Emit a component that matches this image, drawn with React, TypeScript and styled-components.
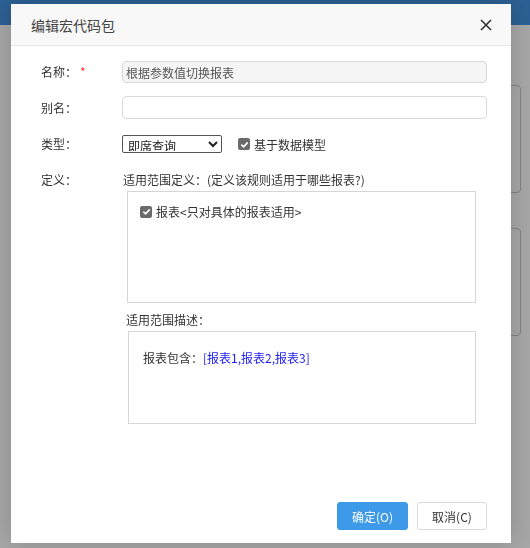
import React from "react";
import styled, { createGlobalStyle } from "styled-components";

const GlobalStyle = createGlobalStyle`
  html, body {
    margin: 0;
    padding: 0;
    width: 530px;
    height: 548px;
    overflow: hidden;
    background: #fff;
    font-family: "Noto Sans CJK SC", "Noto Sans", sans-serif;
    font-size: 12px;
    color: #333;
  }
  * { box-sizing: border-box; }
`;

const Page = styled.div`
  height: 548px;
  display: flex;
  flex-direction: column;
`;

const TopBar = styled.div`
  height: 25px;
  background: #4493e2;
`;

const PageContent = styled.div`
  display: flex;
  flex-direction: column;
  gap: 35px;
  padding: 60px 9px 0 300px;
`;

const BgCard = styled.div`
  height: 108px;
  border: 1px solid #c8c8c8;
  border-radius: 4px;
  background: #fff;
`;

const Mask = styled.div`
  position: fixed;
  inset: 0;
  background: rgba(0, 0, 0, 0.35);
`;

const Dialog = styled.div`
  position: fixed;
  left: 11px;
  top: 4px;
  width: 500px;
  height: 539px;
  background: #fff;
  display: flex;
  flex-direction: column;
  box-shadow: 0 0 24px rgba(0, 0, 0, 0.18);
`;

const Header = styled.div`
  height: 42px;
  flex: none;
  display: flex;
  align-items: center;
  justify-content: space-between;
  padding: 0 18px 0 20px;
  background: #f8f8f8;
  border-bottom: 1px solid #e6e6e6;
`;

const Title = styled.h2`
  margin: 0;
  font-size: 14px;
  font-weight: normal;
  color: #444;
`;

const CloseButton = styled.button`
  border: none;
  background: none;
  padding: 0;
  width: 14px;
  height: 14px;
  display: flex;
  align-items: center;
  justify-content: center;
  cursor: pointer;
`;

const Body = styled.div`
  flex: 1;
  padding: 15px 24px 0 30px;
  display: flex;
  flex-direction: column;
`;

const Row = styled.div<{ $top: number }>`
  display: flex;
  align-items: flex-start;
  margin-top: ${({ $top }) => $top}px;
`;

const Label = styled.label<{ $height: number }>`
  width: 81px;
  flex: none;
  height: ${({ $height }) => $height}px;
  line-height: ${({ $height }) => $height}px;
  color: #333;
  white-space: nowrap;
`;

const Required = styled.span`
  color: #f33;
  margin-left: 3px;
`;

const Field = styled.div`
  flex: 1;
  display: flex;
  flex-direction: column;
  min-width: 0;
`;

const TextInput = styled.input<{ $height: number }>`
  width: 100%;
  height: ${({ $height }) => $height}px;
  border: 1px solid #d9d9d9;
  border-radius: 4px;
  padding: 0 3px;
  font-family: inherit;
  font-size: 12px;
  color: #555;
  background: ${({ readOnly }) => (readOnly ? "#f5f5f5" : "#fff")};
  outline: none;
`;

const Inline = styled.div`
  display: flex;
  align-items: center;
  height: 18px;
`;

const Select = styled.select`
  width: 100px;
  height: 18px;
  font-family: inherit;
  font-size: 12px;
  line-height: 14px;
  color: #222;
  border: 1px solid #555;
  border-radius: 2px;
  padding: 0 0 1px 1px;
  background: #fff;
`;

const CheckLabel = styled.label<{ $gap: number }>`
  display: flex;
  align-items: center;
  gap: ${({ $gap }) => $gap}px;
  color: #333;
  white-space: nowrap;
`;

const Box = styled.span`
  width: 12px;
  height: 12px;
  border-radius: 2px;
  background: #6b6b6b;
  display: flex;
  align-items: center;
  justify-content: center;
  flex: none;
`;

const SectionTitle = styled.div<{ $indent: number }>`
  height: 18px;
  line-height: 18px;
  margin-left: ${({ $indent }) => $indent}px;
  color: #333;
  white-space: nowrap;
`;

const Panel = styled.div<{ $indent: number; $height: number; $pad: string }>`
  margin: 2px 11px 0 ${({ $indent }) => $indent}px;
  height: ${({ $height }) => $height}px;
  border: 1px solid #d6d6d6;
  padding: ${({ $pad }) => $pad};
`;

const Describe = styled.div`
  color: #333;
  line-height: 16px;
`;

const Link = styled.span`
  color: #1c1cf0;
`;

const Footer = styled.div`
  flex: none;
  display: flex;
  justify-content: flex-end;
  gap: 9px;
  padding: 0 24px 13px 0;
`;

const Button = styled.button<{ $primary?: boolean }>`
  height: 28px;
  width: ${({ $primary }) => ($primary ? 71 : 70)}px;
  border-radius: 3px;
  font-family: inherit;
  font-size: 12px;
  cursor: pointer;
  border: 1px solid ${({ $primary }) => ($primary ? "#3d9ae8" : "#dcdcdc")};
  background: ${({ $primary }) => ($primary ? "#3d9ae8" : "#fff")};
  color: ${({ $primary }) => ($primary ? "#fff" : "#333")};
`;

const Check = () => (
  <Box>
    <svg width="9" height="9" viewBox="0 0 10 10">
      <path d="M1.5 5.2 L4 7.6 L8.6 2.6" fill="none" stroke="#fff" strokeWidth="1.8" />
    </svg>
  </Box>
);

export default function App() {
  return (
    <>
      <GlobalStyle />
      <Page>
        <TopBar />
        <PageContent>
          <BgCard />
          <BgCard />
        </PageContent>
      </Page>
      <Mask />
      <Dialog>
        <Header>
          <Title>编辑宏代码包</Title>
          <CloseButton aria-label="close">
            <svg width="12" height="12" viewBox="0 0 12 12">
              <path d="M1 1 L11 11 M11 1 L1 11" stroke="#333" strokeWidth="1.6" />
            </svg>
          </CloseButton>
        </Header>
        <Body>
          <Row $top={0}>
            <Label $height={22}>
              名称：<Required>*</Required>
            </Label>
            <Field>
              <TextInput $height={22} readOnly value="根据参数值切换报表" />
            </Field>
          </Row>
          <Row $top={13}>
            <Label $height={23}>别名：</Label>
            <Field>
              <TextInput $height={23} defaultValue="" />
            </Field>
          </Row>
          <Row $top={16}>
            <Label $height={18}>类型：</Label>
            <Field>
              <Inline>
                <Select defaultValue="adhoc">
                  <option value="adhoc">即席查询</option>
                </Select>
                <CheckLabel $gap={4} style={{ marginLeft: 16 }}>
                  <Check />
                  基于数据模型
                </CheckLabel>
              </Inline>
            </Field>
          </Row>
          <Row $top={18}>
            <Label $height={18}>定义：</Label>
            <Field>
              <SectionTitle $indent={1}>适用范围定义：(定义该规则适用于哪些报表?)</SectionTitle>
              <Panel $indent={5} $height={112} $pad="11px 12px">
                <CheckLabel $gap={4}>
                  <Check />
                  报表&lt;只对具体的报表适用&gt;
                </CheckLabel>
              </Panel>
              <SectionTitle $indent={4} style={{ marginTop: 8 }}>
                适用范围描述：
              </SectionTitle>
              <Panel $indent={6} $height={93} $pad="18px 14px">
                <Describe>
                  报表包含：<Link>[报表1,报表2,报表3]</Link>
                </Describe>
              </Panel>
            </Field>
          </Row>
        </Body>
        <Footer>
          <Button $primary>确定(O)</Button>
          <Button>取消(C)</Button>
        </Footer>
      </Dialog>
    </>
  );
}
